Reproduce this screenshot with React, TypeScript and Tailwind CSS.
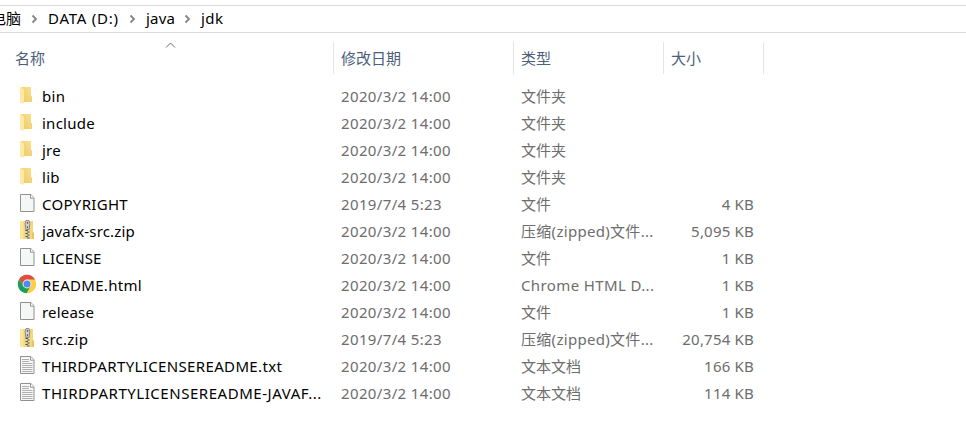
import React from "react";

type Kind = "folder" | "file" | "zip" | "chrome" | "text";

interface Entry {
  name: string;
  kind: Kind;
  date: string;
  type: string;
  size?: string;
  nameClass?: string;
  typeClass?: string;
}

const entries: Entry[] = [
  { name: "bin", kind: "folder", date: "2020/3/2 14:00", type: "文件夹", nameClass: "tracking-[0.3px]" },
  { name: "include", kind: "folder", date: "2020/3/2 14:00", type: "文件夹", nameClass: "tracking-[0.25px]" },
  { name: "jre", kind: "folder", date: "2020/3/2 14:00", type: "文件夹", nameClass: "tracking-[0.2px]" },
  { name: "lib", kind: "folder", date: "2020/3/2 14:00", type: "文件夹", nameClass: "tracking-[0.3px]" },
  { name: "COPYRIGHT", kind: "file", date: "2019/7/4 5:23", type: "文件", size: "4 KB", nameClass: "tracking-[0.3px]" },
  { name: "javafx-src.zip", kind: "zip", date: "2020/3/2 14:00", type: "压缩(zipped)文件...", size: "5,095 KB", nameClass: "tracking-[0.15px]", typeClass: "tracking-[0.3px]" },
  { name: "LICENSE", kind: "file", date: "2020/3/2 14:00", type: "文件", size: "1 KB", nameClass: "tracking-[0.1px]" },
  { name: "README.html", kind: "chrome", date: "2020/3/2 14:00", type: "Chrome HTML D...", size: "1 KB", nameClass: "tracking-[0.28px]", typeClass: "tracking-[0.38px]" },
  { name: "release", kind: "file", date: "2020/3/2 14:00", type: "文件", size: "1 KB", nameClass: "tracking-[0.2px]" },
  { name: "src.zip", kind: "zip", date: "2019/7/4 5:23", type: "压缩(zipped)文件...", size: "20,754 KB", nameClass: "tracking-[0.25px]", typeClass: "tracking-[0.3px]" },
  { name: "THIRDPARTYLICENSEREADME.txt", kind: "text", date: "2020/3/2 14:00", type: "文本文档", size: "166 KB", nameClass: "tracking-[0.36px]" },
  { name: "THIRDPARTYLICENSEREADME-JAVAF...", kind: "text", date: "2020/3/2 14:00", type: "文本文档", size: "114 KB", nameClass: "tracking-[0.54px]" },
];

function FolderIcon() {
  return (
    <svg width="20" height="20" viewBox="0 0 20 20">
      <defs>
        <linearGradient id="folder-back" x1="0" x2="1" y1="1" y2="0">
          <stop offset="0" stopColor="#edc968" />
          <stop offset="1" stopColor="#fbe08d" />
        </linearGradient>
      </defs>
      <path d="M4 2h10v9.5h1V17H4z" fill="url(#folder-back)" />
      <path d="M14 11.5h1V17h-1z" fill="#f2d07a" />
      <path d="M3 2l1.2.4L7 4.4v13.2L6 19l-3-1.6z" fill="#ffe9a6" />
    </svg>
  );
}

function FileIcon({ lines = false }: { lines?: boolean }) {
  return (
    <svg width="20" height="20" viewBox="0 0 20 20">
      <path d="M3.5 1.5h10.3l3.2 3.2v13.8H3.5z" fill={lines ? "#f7f7f7" : "#f5f6f6"} stroke="#919191" />
      <path d="M13.5 1.5v3.7h3.4" fill="#fff" stroke="#919191" />
      {lines && (
        <path d="M5 4.5h7M5 6.5h7M5 8.5h10.5M5 10.5h10.5M5 12.5h10.5M5 14.5h10.5M5 16.5h10.5" stroke="#b0b0b0" />
      )}
    </svg>
  );
}

function ZipIcon() {
  return (
    <svg width="20" height="20" viewBox="0 0 20 20">
      <path d="M3 1h13v11.5h1V19H3z" fill="#f6d777" />
      <path d="M3 1h3.5v18H3z" fill="#fde595" />
      <path d="M15 12.5h2V19h-2z" fill="#eac55c" />
      <path d="M8 8h5v11H8z" fill="#e4d69f" />
      <path d="M8.5 10.5h2.3M10.2 12h2.3M8.5 13.5h2.3M10.2 15h2.3M8.5 16.5h2.3M10.2 18h2.3" stroke="#4d4d4d" strokeWidth="1.1" />
      <path d="M9 .5h3l.8 3-.6 6H8.8l-.6-6z" fill="#cfd2d5" stroke="#777b7f" strokeWidth=".8" />
      <path d="M9.8 2h1.4v1.8H9.8zM9.9 6.2h1.2v2H9.9z" fill="#5d6164" />
    </svg>
  );
}

function ChromeIcon() {
  return (
    <svg width="20" height="20" viewBox="0 0 20 20">
      <circle cx="10" cy="10" r="9.2" fill="#ffcd41" />
      <path d="M2 5.4A9.2 9.2 0 0 1 18 5.6H10L6.2 12z" fill="#dd4f43" />
      <path d="M2 5.4A9.2 9.2 0 0 0 9.5 19.2l4-7.2-3.5 2-3.8-2z" fill="#17a05e" />
      <circle cx="10" cy="10" r="4.4" fill="#f2f2f2" />
      <circle cx="10" cy="10" r="3.5" fill="#4c8bf5" />
    </svg>
  );
}

function EntryIcon({ kind }: { kind: Kind }) {
  if (kind === "folder") return <FolderIcon />;
  if (kind === "zip") return <ZipIcon />;
  if (kind === "chrome") return <ChromeIcon />;
  return <FileIcon lines={kind === "text"} />;
}

function Crumb({ className }: { className: string }) {
  return (
    <svg className={className} width="8" height="10" viewBox="0 0 8 10" fill="none">
      <path d="M1.5 1.5L5 5 1.5 8.5" stroke="#848484" strokeWidth="1.8" />
    </svg>
  );
}

export default function App() {
  return (
    <div className="h-[439px] w-[966px] overflow-hidden bg-white pt-[5px] font-['Noto_Sans','Noto_Sans_CJK_SC',sans-serif] text-[15px] leading-[27px] whitespace-nowrap">
      <nav className="flex h-7 items-center border-y border-[#d9d9d9] pb-[2px] text-black">
        <span className="-ml-[9px] w-[30px]">电脑</span>
        <Crumb className="mt-px ml-[10px] shrink-0" />
        <span className="ml-[9px] w-[71px] tracking-[0.75px]">DATA (D:)</span>
        <Crumb className="mt-px ml-[10px] shrink-0" />
        <span className="ml-[9px] w-[29px] tracking-[0.2px]">java</span>
        <Crumb className="mt-px ml-[9px] shrink-0" />
        <span className="ml-[9px] tracking-[0.5px]">jdk</span>
      </nav>

      <div className="mt-[9px] flex h-8 items-center text-[#4c607a]">
        <div className="relative flex h-8 w-[334px] items-center border-r border-[#e5e5e5] pl-[15px]">
          <svg className="absolute top-0 left-[165px]" width="11" height="6" viewBox="0 0 11 6" fill="none">
            <path d="M1 5.5l4.5-4.5L10 5.5" stroke="#6d6d6d" />
          </svg>
          名称
        </div>
        <div className="flex h-8 w-[180px] items-center border-r border-[#e5e5e5] pl-[7px]">修改日期</div>
        <div className="flex h-8 w-[150px] items-center border-r border-[#e5e5e5] pl-[7px]">类型</div>
        <div className="flex h-8 w-[100px] items-center border-r border-[#e5e5e5] pl-[7px]">大小</div>
      </div>

      <ul className="mt-[9px]">
        {entries.map((e) => (
          <li key={e.name} className="flex h-[27px] text-[#6d6d6d]">
            <div className="flex w-[341px] pl-[17px]">
              <div className="mt-[2px] h-5 w-5 shrink-0">
                <EntryIcon kind={e.kind} />
              </div>
              <span className={`ml-[5px] text-black ${e.nameClass ?? ""}`}>{e.name}</span>
            </div>
            <div className="w-[180px] tracking-[0.36px]">{e.date}</div>
            <div className={`w-[143px] ${e.typeClass ?? ""}`}>{e.type}</div>
            <div className="w-[90px] text-right tracking-[0.2px]">{e.size}</div>
          </li>
        ))}
      </ul>
    </div>
  );
}
